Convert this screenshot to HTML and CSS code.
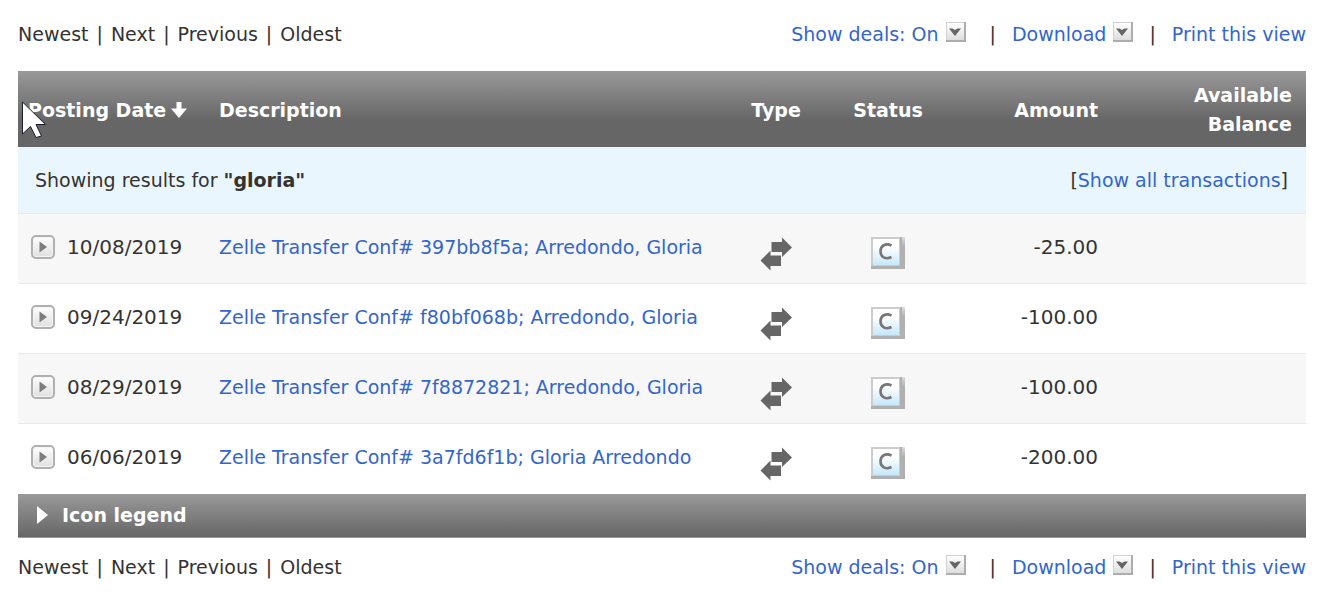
FILE: index.html
```html
<!DOCTYPE html>
<html lang="en">
    <head>
        <meta charset="utf-8">
        <title>Account Activity</title>
        <link rel="stylesheet" href="styles.css">
    </head>
    <body>
        <!-- shared icons -->
        <svg class="icon-defs" width="0" height="0" aria-hidden="true">
            <defs>
                <linearGradient id="grad-button" x1="0" y1="0" x2="0" y2="1">
                    <stop offset="0" stop-color="#ffffff"/>
                    <stop offset="1" stop-color="#dedede"/>
                </linearGradient>
                <linearGradient id="grad-status" x1="0" y1="0" x2="0" y2="1">
                    <stop offset="0.3" stop-color="#ffffff"/>
                    <stop offset="1" stop-color="#c5e8fc"/>
                </linearGradient>
                <linearGradient id="grad-shadow" x1="0" y1="0" x2="0" y2="1">
                    <stop offset="0" stop-color="#dddddd"/>
                    <stop offset="0.3" stop-color="#b0b0b0"/>
                </linearGradient>
            </defs>
            <symbol id="icon-menu" viewBox="0 0 20 20">
                <rect width="20" height="20" fill="#adadad"/>
                <rect width="18" height="18" fill="#d2d2d2"/>
                <rect x="1" y="1" width="17" height="17" fill="url(#grad-button)"/>
                <path d="M3 6.500h3.500l2.500 1.500 2.500-1.500h3.500l-6 7.500z" fill="#666666"/>
            </symbol>
            <symbol id="icon-expand" viewBox="0 0 24 24">
                <rect x="1" y="1" width="22" height="22" rx="4" fill="url(#grad-button)" stroke="#b0b0b0" stroke-width="2"/>
                <rect x="2.500" y="2.500" width="19" height="19" rx="3" fill="none" stroke="#f4f4f4"/>
                <path d="M8.500 6.500l7.500 5.500-7.500 5.500z" fill="#7d7d7d"/>
            </symbol>
            <symbol id="icon-transfer" viewBox="0 0 32 34">
                <path d="M11.500 5H22V0.500L32 10.500L22 20V15H11.500z" fill="#666666"/>
                <path d="M21 18.500H10.500V13.500L0.500 23.500L10.500 33.500V29H21z" fill="#666666"/>
            </symbol>
            <symbol id="icon-cleared" viewBox="0 0 34 32">
                <path d="M0 29H29V32H0z" fill="#b0b0b0"/>
                <path d="M29 0h2v32h-2z" fill="#b0b0b0"/>
                <path d="M31 0h3v32h-3z" fill="url(#grad-shadow)"/>
                <rect width="29" height="29" fill="#cccccc"/>
                <rect x="2" y="2" width="26" height="26" fill="url(#grad-status)"/>
                <path d="M20.500 8.500C14.500 5.600 9.500 8.800 9.500 14.300C9.500 20 14.500 23 20.500 20" fill="none" stroke="#777777" stroke-width="2.600"/>
            </symbol>
        </svg>

        <div class="pager">
            <div class="pager-pages">
                <span>Newest</span>
                <span>|</span>
                <span>Next</span>
                <span>|</span>
                <span>Previous</span>
                <span>|</span>
                <span>Oldest</span>
            </div>
            <div class="pager-tools">
                <a class="deals" href="#">Show deals: On <svg class="icon-menu" aria-hidden="true"><use href="#icon-menu"/></svg></a>
                <span>|</span>
                <a class="download" href="#">Download <svg class="icon-menu" aria-hidden="true"><use href="#icon-menu"/></svg></a>
                <span>|</span>
                <a class="print" href="#">Print this view</a>
            </div>
        </div>

        <table class="transactions">
            <colgroup>
                <col class="col-date">
                <col class="col-description">
                <col class="col-type">
                <col class="col-status">
                <col class="col-amount">
                <col class="col-balance">
            </colgroup>
            <thead>
                <tr>
                    <th class="date" scope="col">
                        <a class="sort" href="#">Posting Date<svg class="icon-sort" viewBox="0 0 16 16" aria-hidden="true"><path d="M5.500 0h5v6.500H16L8 16L0 6.500h5.500z" fill="#ffffff"/></svg></a>
                    </th>
                    <th class="description" scope="col">Description</th>
                    <th class="type" scope="col">Type</th>
                    <th class="status" scope="col">Status</th>
                    <th class="amount" scope="col">Amount</th>
                    <th class="balance" scope="col">Available Balance</th>
                </tr>
            </thead>
            <tbody>
                <tr class="results">
                    <td colspan="6">
                        <div class="results-bar">
                            <span>Showing results for <b>"gloria"</b></span>
                            <span>[<a href="#">Show all transactions</a>]</span>
                        </div>
                    </td>
                </tr>
                <tr class="row odd">
                    <td class="date"><div class="date-cell"><button class="expand" type="button" aria-label="Expand"><svg class="icon-expand"><use href="#icon-expand"/></svg></button>10/08/2019</div></td>
                    <td class="description"><a href="#">Zelle Transfer Conf# 397bb8f5a; Arredondo, Gloria</a></td>
                    <td class="type"><svg class="icon-transfer"><use href="#icon-transfer"/></svg></td>
                    <td class="status"><svg class="icon-cleared"><use href="#icon-cleared"/></svg></td>
                    <td class="amount">-25.00</td>
                    <td class="balance"></td>
                </tr>
                <tr class="row">
                    <td class="date"><div class="date-cell"><button class="expand" type="button" aria-label="Expand"><svg class="icon-expand"><use href="#icon-expand"/></svg></button>09/24/2019</div></td>
                    <td class="description"><a href="#">Zelle Transfer Conf# f80bf068b; Arredondo, Gloria</a></td>
                    <td class="type"><svg class="icon-transfer"><use href="#icon-transfer"/></svg></td>
                    <td class="status"><svg class="icon-cleared"><use href="#icon-cleared"/></svg></td>
                    <td class="amount">-100.00</td>
                    <td class="balance"></td>
                </tr>
                <tr class="row odd">
                    <td class="date"><div class="date-cell"><button class="expand" type="button" aria-label="Expand"><svg class="icon-expand"><use href="#icon-expand"/></svg></button>08/29/2019</div></td>
                    <td class="description"><a href="#">Zelle Transfer Conf# 7f8872821; Arredondo, Gloria</a></td>
                    <td class="type"><svg class="icon-transfer"><use href="#icon-transfer"/></svg></td>
                    <td class="status"><svg class="icon-cleared"><use href="#icon-cleared"/></svg></td>
                    <td class="amount">-100.00</td>
                    <td class="balance"></td>
                </tr>
                <tr class="row">
                    <td class="date"><div class="date-cell"><button class="expand" type="button" aria-label="Expand"><svg class="icon-expand"><use href="#icon-expand"/></svg></button>06/06/2019</div></td>
                    <td class="description"><a href="#">Zelle Transfer Conf# 3a7fd6f1b; Gloria Arredondo</a></td>
                    <td class="type"><svg class="icon-transfer"><use href="#icon-transfer"/></svg></td>
                    <td class="status"><svg class="icon-cleared"><use href="#icon-cleared"/></svg></td>
                    <td class="amount">-200.00</td>
                    <td class="balance"></td>
                </tr>
            </tbody>
        </table>

        <button class="legend" type="button">
            <svg class="icon-legend" viewBox="0 0 11 18" aria-hidden="true"><path d="M0 0L11 9L0 18z" fill="#ffffff"/></svg>
            Icon legend
        </button>

        <div class="pager pager-bottom">
            <div class="pager-pages">
                <span>Newest</span>
                <span>|</span>
                <span>Next</span>
                <span>|</span>
                <span>Previous</span>
                <span>|</span>
                <span>Oldest</span>
            </div>
            <div class="pager-tools">
                <a class="deals" href="#">Show deals: On <svg class="icon-menu" aria-hidden="true"><use href="#icon-menu"/></svg></a>
                <span>|</span>
                <a class="download" href="#">Download <svg class="icon-menu" aria-hidden="true"><use href="#icon-menu"/></svg></a>
                <span>|</span>
                <a class="print" href="#">Print this view</a>
            </div>
        </div>

        <svg class="cursor" viewBox="0 0 24 38" aria-hidden="true"><path d="M0.500 1V33L8.500 25.500L14 36.500L19.500 35L14 23.500H23.500z" fill="#ffffff" stroke="#1c1c2c"/></svg>
    </body>
</html>
```

FILE: styles.css
```css
body {
    margin: 0;
    padding: 0 21px 0 18px;
    background-color: #ffffff;
    color: #333333;
    font-family: "DejaVu Sans", Verdana, sans-serif;
    font-size: 19px;
    line-height: 24px;
}

a {
    color: #3366cc;
    text-decoration: none;
}

a:hover {
    text-decoration: underline;
}

button {
    margin: 0;
    padding: 0;
    border: 0;
    background: none;
    color: inherit;
    font: inherit;
    cursor: pointer;
}

.icon-defs {
    position: absolute;
}

/* links above and below the table */
.pager {
    display: flex;
    justify-content: space-between;
    padding: 22px 0 25px;
    white-space: nowrap;
}

.pager-bottom {
    padding: 17px 0;
}

.pager-pages {
    display: flex;
    gap: 8px;
}

.pager-tools {
    display: flex;
}

.pager-tools a {
    display: flex;
    gap: 7px;
}

.deals {
    margin-right: 24px;
}

.download {
    margin: 0 16px;
}

.print {
    margin-left: 16px;
}

.icon-menu {
    width: 20px;
    height: 20px;
}

/* transactions */
.transactions {
    width: 100%;
    border-collapse: collapse;
    table-layout: fixed;
}

.col-date {
    width: 201px;
}

.col-type,
.col-status {
    width: 112px;
}

.col-amount {
    width: 163px;
}

.col-balance {
    width: 199px;
}

.transactions th,
.transactions td {
    padding: 0;
    text-align: left;
}

.transactions thead {
    background: linear-gradient(#999999, #666666 65%);
    color: #ffffff;
}

.transactions th {
    height: 74px;
    padding-top: 2px;
    line-height: 29px;
}

.transactions th.date {
    padding-left: 10px;
}

.sort {
    display: flex;
    align-items: center;
    gap: 5px;
    color: #ffffff;
}

.icon-sort {
    width: 16px;
    height: 16px;
}

.transactions .type,
.transactions .status {
    text-align: center;
}

.transactions .amount {
    padding-right: 9px;
    text-align: right;
}

.transactions .balance {
    padding-left: 80px;
    padding-right: 14px;
    text-align: right;
}

.results {
    background-color: #eaf6fd;
}

.results-bar {
    display: flex;
    justify-content: space-between;
    padding: 21px 18px 21px 17px;
}

.row td {
    border-top: 1px solid #ebebeb;
    vertical-align: top;
    white-space: nowrap;
}

.odd {
    background-color: #f7f7f7;
}

.row .date,
.row .description,
.row .amount {
    padding-top: 21px;
    height: 48px;
}

.row .date,
.row .amount {
    font-size: 20px;
}

.row .type,
.row .status {
    padding-top: 23px;
    height: 46px;
}

.date-cell {
    display: flex;
    gap: 12px;
    padding-left: 13px;
}

.expand,
.icon-expand {
    display: block;
    width: 24px;
    height: 24px;
}

.icon-transfer {
    width: 32px;
    height: 34px;
}

.icon-cleared {
    width: 34px;
    height: 32px;
}

/* legend bar */
.legend {
    display: flex;
    align-items: center;
    gap: 14px;
    width: 100%;
    height: 44px;
    margin-top: 1px;
    padding: 0 19px 2px;
    border-bottom: 1px solid #999999;
    background: linear-gradient(#999999, #666666);
    color: #ffffff;
    font-weight: bold;
}

.icon-legend {
    width: 11px;
    height: 18px;
}

.cursor {
    position: absolute;
    left: 22px;
    top: 101px;
    width: 24px;
    height: 38px;
}
```
